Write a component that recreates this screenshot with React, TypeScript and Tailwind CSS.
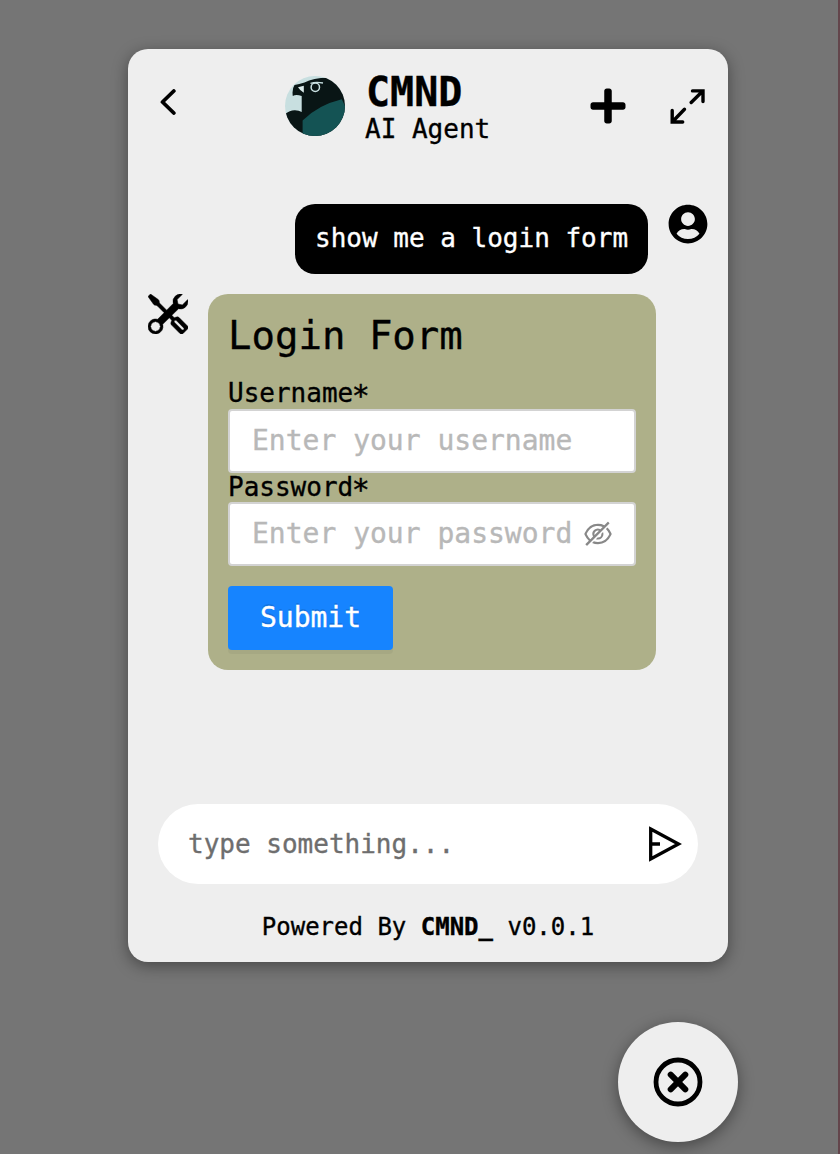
import React from "react";
import { FaPlus, FaUserCircle } from "react-icons/fa";
import { BsTools } from "react-icons/bs";
import { AiOutlineEyeInvisible } from "react-icons/ai";

function BirdLogo() {
  return (
    <svg viewBox="0 0 60 60" className="h-[60px] w-[60px] shrink-0">
      <defs>
        <clipPath id="round">
          <circle cx="30" cy="30" r="30" />
        </clipPath>
      </defs>
      <g clipPath="url(#round)">
        <rect width="60" height="60" fill="#c8dfe0" />
        <path d="M7.800 20Q6.800 13 9.500 9Q14 8.200 19.500 6.500Q28 2 43 1.800L62 14V62H0V38Q5 34 10 34.200Q14 34.300 16.700 36V20Q11 18 7.800 20Z" fill="#091515" />
        <path d="M17.600 44.500Q33 29 56.800 23.300L60 30L62 35V62H17.600Z" fill="#145354" />
        <path d="M13 11.300L18.800 9.800V16.800Q15 14.500 13 11.300Z" fill="#dcecec" />
        <circle cx="30.300" cy="11.300" r="4.200" fill="none" stroke="#c8dfe0" strokeWidth="1.500" />
        <path d="M25.500 7.300Q31 5.800 38 7" fill="none" stroke="#c8dfe0" strokeWidth="1.300" />
      </g>
    </svg>
  );
}

function FieldLabel({ children }: { children: string }) {
  return (
    <label className="-mt-px mb-px h-[30px] shrink-0 text-[26px]/[30px]">
      {children}
      <span className="inline-block translate-y-[3px] scale-[1.15]">*</span>
    </label>
  );
}

export default function App() {
  return (
    <div className="flex h-[1154px] w-[840px] overflow-hidden border-r-2 border-[#63454b] bg-[#757575] font-['DejaVu_Sans_Mono',monospace] text-black [-webkit-text-stroke:0.35px]">
      <div className="flex w-[738px] flex-col items-end pt-[49px]">
        <main className="mr-2.5 flex h-[913px] w-[600px] flex-col rounded-[20px] bg-[#eee] shadow-[0_4px_16px_rgba(0,0,0,0.4)]">
          <header className="flex h-[115px] shrink-0 pt-6">
            <button className="flex h-[58px] w-[157px] items-center pl-8" aria-label="Back">
              <svg viewBox="0 0 16 26" className="h-[26px] w-4" fill="none" stroke="currentColor" strokeWidth="3.800" strokeLinecap="round" strokeLinejoin="round">
                <path d="M13.800 2L2.500 13L13.800 24" />
              </svg>
            </button>
            <div className="flex w-[305px] gap-[21px] pt-[3px]">
              <BirdLogo />
              <div className="-mt-[7px]">
                <h1 className="h-[45px] text-[40px]/[46px] font-bold">CMND</h1>
                <p className="-ml-px text-[26px]/[30px]">AI Agent</p>
              </div>
            </div>
            <button className="mt-[13px] h-10 w-20" aria-label="New chat">
              <FaPlus className="h-10 w-9" />
            </button>
            <button className="mt-4 h-[35px] w-[35px]" aria-label="Expand">
              <svg viewBox="0 0 35 35" className="h-[35px] w-[35px]" fill="none" stroke="currentColor" strokeWidth="3.400" strokeLinecap="round">
                <path d="M21.200 13.500L32.500 2.200M22.500 1.900H33V12.500" />
                <path d="M14.500 20.300L2.700 32.500M2.200 21.500V33H12.700" />
              </svg>
            </button>
          </header>
          <section className="flex flex-1 flex-col gap-5 px-5 pt-10">
            <div className="flex items-start justify-end gap-5">
              <p className="h-[70px] w-[353px] rounded-[20px] bg-black pl-5 text-[26px]/[68px] whitespace-nowrap text-white">show me a login form</p>
              <FaUserCircle className="h-10 w-10" />
            </div>
            <div className="flex items-start gap-5">
              <BsTools className="h-10 w-10" stroke="currentColor" strokeWidth=".2" />
              <form className="flex h-[376px] w-[448px] flex-col rounded-[20px] bg-[#aeb089] px-5 pt-5">
                <h2 className="mb-[22px] h-[43px] text-[39px]/[43px]">Login Form</h2>
                <FieldLabel>Username</FieldLabel>
                <div className="flex h-16 w-[408px] shrink-0 items-center rounded-[4px] border-2 border-[#d3d3d3] bg-white px-[22px] text-[28px] text-[#b8b8b8]">
                  Enter your username
                </div>
                <div className="flex h-[29px] shrink-0 flex-col">
                  <FieldLabel>Password</FieldLabel>
                </div>
                <div className="flex h-16 w-[408px] shrink-0 items-center justify-between rounded-[4px] border-2 border-[#d3d3d3] bg-white px-[22px] text-[28px] whitespace-nowrap text-[#b8b8b8]">
                  <span>Enter your password</span>
                  <AiOutlineEyeInvisible className="-mr-0.5 h-8 w-8 shrink-0 text-[#888]" />
                </div>
                <button className="mt-5 h-16 w-[165px] shrink-0 rounded-[4px] bg-[#1684ff] text-[28px] text-white shadow-[0_4px_0_rgba(0,0,0,0.045)] [text-shadow:0_-2px_0_rgba(0,0,0,0.12)]">Submit</button>
              </form>
            </div>
          </section>
          <footer className="flex h-[158px] shrink-0 flex-col items-center">
            <div className="flex h-20 w-[540px] items-center justify-between rounded-full bg-white pr-4 pl-[30px]">
              <span className="text-[26px] text-[#6e6e6e]">type something...</span>
              <svg viewBox="0 0 34 36" className="h-9 w-[34px]" fill="none" stroke="currentColor" strokeWidth="3.300">
                <path d="M2.700 3L30.500 18L2.700 33ZM2.500 18H12" />
              </svg>
            </div>
            <p className="mt-7 text-[24px]/[30px] whitespace-nowrap">Powered By <b>CMND_</b> v0.0.1</p>
          </footer>
        </main>
        <button className="mt-[60px] flex h-[120px] w-[120px] shrink-0 items-center justify-center rounded-full bg-[#eee] shadow-[0_4px_16px_rgba(0,0,0,0.4)]" aria-label="Close">
          <svg viewBox="0 0 50 50" className="h-[50px] w-[50px]" fill="none" stroke="currentColor">
            <circle cx="25" cy="25" r="22" strokeWidth="4.800" />
            <path d="M17.700 17.700L32.300 32.300M32.300 17.700L17.700 32.300" strokeWidth="6" strokeLinecap="round" />
          </svg>
        </button>
      </div>
    </div>
  );
}
